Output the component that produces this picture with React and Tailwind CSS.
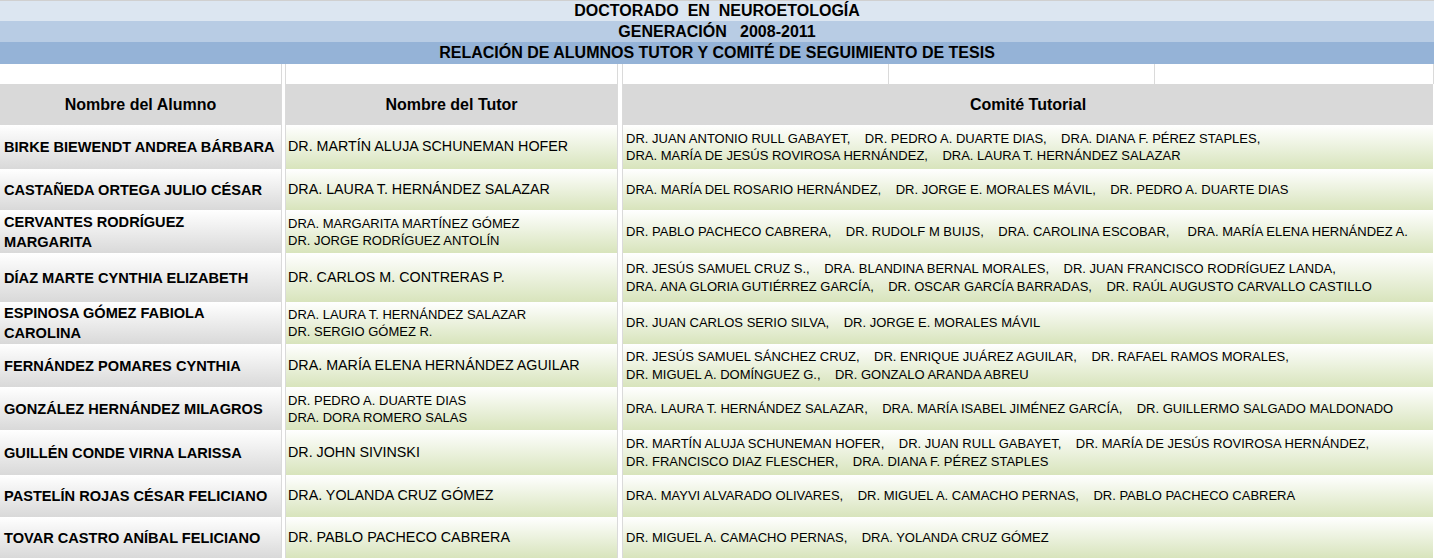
import React from "react";

const SEP = "    ";

const rows = [
  {
    h: "h-[44px]",
    alumno: ["BIRKE BIEWENDT ANDREA BÁRBARA"],
    tutor: ["DR. MARTÍN ALUJA SCHUNEMAN HOFER"],
    comite: [
      ["DR. JUAN ANTONIO RULL GABAYET,", "DR. PEDRO A. DUARTE DIAS,", "DRA. DIANA F. PÉREZ STAPLES,"],
      ["DRA. MARÍA DE JESÚS ROVIROSA HERNÁNDEZ,", "DRA. LAURA T. HERNÁNDEZ SALAZAR"],
    ],
  },
  {
    h: "h-[41px]",
    alumno: ["CASTAÑEDA ORTEGA JULIO CÉSAR"],
    tutor: ["DRA. LAURA T. HERNÁNDEZ SALAZAR"],
    comite: [["DRA. MARÍA DEL ROSARIO HERNÁNDEZ,", "DR. JORGE E. MORALES MÁVIL,", "DR. PEDRO A. DUARTE DIAS"]],
  },
  {
    h: "h-[43px]",
    alumno: ["CERVANTES RODRÍGUEZ", "MARGARITA"],
    tutor: ["DRA. MARGARITA MARTÍNEZ GÓMEZ", "DR. JORGE RODRÍGUEZ ANTOLÍN"],
    comite: [["DR. PABLO PACHECO CABRERA,", "DR. RUDOLF M BUIJS,", "DRA. CAROLINA ESCOBAR,", " DRA. MARÍA ELENA HERNÁNDEZ A."]],
  },
  {
    h: "h-[49px]",
    alumno: ["DÍAZ MARTE CYNTHIA ELIZABETH"],
    tutor: ["DR. CARLOS M. CONTRERAS P."],
    comite: [
      ["DR. JESÚS SAMUEL CRUZ S.,", "DRA. BLANDINA BERNAL MORALES,", "DR. JUAN FRANCISCO RODRÍGUEZ LANDA,"],
      ["DRA. ANA GLORIA GUTIÉRREZ GARCÍA,", "DR. OSCAR GARCÍA BARRADAS,", "DR. RAÚL AUGUSTO CARVALLO CASTILLO"],
    ],
  },
  {
    h: "h-[42px]",
    alumno: ["ESPINOSA GÓMEZ FABIOLA", "CAROLINA"],
    tutor: ["DRA. LAURA T. HERNÁNDEZ SALAZAR", "DR. SERGIO GÓMEZ R."],
    comite: [["DR. JUAN CARLOS SERIO SILVA,", "DR. JORGE E. MORALES MÁVIL"]],
  },
  {
    h: "h-[43px]",
    alumno: ["FERNÁNDEZ POMARES CYNTHIA"],
    tutor: ["DRA. MARÍA ELENA HERNÁNDEZ AGUILAR"],
    comite: [
      ["DR. JESÚS SAMUEL SÁNCHEZ CRUZ,", "DR. ENRIQUE JUÁREZ AGUILAR,", "DR. RAFAEL RAMOS MORALES,"],
      ["DR. MIGUEL A. DOMÍNGUEZ G.,", "DR. GONZALO ARANDA ABREU"],
    ],
  },
  {
    h: "h-[43px]",
    alumno: ["GONZÁLEZ HERNÁNDEZ MILAGROS"],
    tutor: ["DR. PEDRO A. DUARTE DIAS", "DRA. DORA ROMERO SALAS"],
    comite: [["DRA. LAURA T. HERNÁNDEZ SALAZAR,", "DRA. MARÍA ISABEL JIMÉNEZ GARCÍA,", "DR. GUILLERMO SALGADO MALDONADO"]],
  },
  {
    h: "h-[45px]",
    alumno: ["GUILLÉN CONDE VIRNA LARISSA"],
    tutor: ["DR. JOHN SIVINSKI"],
    comite: [
      ["DR. MARTÍN ALUJA SCHUNEMAN HOFER,", "DR. JUAN RULL GABAYET,", "DR. MARÍA DE JESÚS ROVIROSA HERNÁNDEZ,"],
      ["DR. FRANCISCO DIAZ FLESCHER,", "DRA. DIANA F. PÉREZ STAPLES"],
    ],
  },
  {
    h: "h-[42px]",
    alumno: ["PASTELÍN ROJAS CÉSAR FELICIANO"],
    tutor: ["DRA. YOLANDA CRUZ GÓMEZ"],
    comite: [["DRA. MAYVI ALVARADO OLIVARES,", "DR. MIGUEL A. CAMACHO PERNAS,", "DR. PABLO PACHECO CABRERA"]],
  },
  {
    h: "h-[41px]",
    alumno: ["TOVAR CASTRO ANÍBAL FELICIANO"],
    tutor: ["DR. PABLO PACHECO CABRERA"],
    comite: [["DR. MIGUEL A. CAMACHO PERNAS,", "DRA. YOLANDA CRUZ GÓMEZ"]],
  },
];

function Gap({ w = "w-[5px]" }) {
  // the narrow spacer columns of the sheet
  return <div className={`${w} shrink-0 bg-white border-x border-[#dadada]`} />;
}

export default function App() {
  return (
    <div
      className="w-[1434px] h-[558px] bg-white text-black overflow-hidden"
      style={{ fontFamily: '"Liberation Sans", Arial, sans-serif' }}
    >
      {/* Titles */}
      <div className="h-[21px] bg-[#dce6f1] border-t border-[#d0d0d0] flex items-center justify-center text-[16px] leading-none font-bold whitespace-pre">
        DOCTORADO  EN  NEUROETOLOGÍA
      </div>
      <div className="h-[21px] bg-[#b8cce4] flex items-center justify-center text-[16px] leading-none font-bold whitespace-pre">
        GENERACIÓN   2008-2011
      </div>
      <div className="h-[22px] bg-[#95b3d7] flex items-center justify-center text-[16px] leading-none font-bold">
        RELACIÓN DE ALUMNOS TUTOR Y COMITÉ DE SEGUIMIENTO DE TESIS
      </div>

      {/* Empty spacer row */}
      <div className="h-[20px] flex">
        <div className="w-[281px] shrink-0" />
        <Gap />
        <div className="w-[331px] shrink-0" />
        <Gap w="w-[6px]" />
        <div className="w-[266px] shrink-0 border-r border-[#dadada]" />
        <div className="w-[266px] shrink-0 border-r border-[#dadada]" />
        <div className="flex-1 border-r border-[#dadada]" />
      </div>

      {/* Column headers */}
      <div className="h-[41px] flex text-[16px] font-bold">
        <div className="w-[281px] shrink-0 bg-[#d9d9d9] flex items-center justify-center">Nombre del Alumno</div>
        <Gap />
        <div className="w-[331px] shrink-0 bg-[#d9d9d9] flex items-center justify-center">Nombre del Tutor</div>
        <Gap w="w-[6px]" />
        <div className="flex-1 bg-[#d9d9d9] flex items-center justify-center mr-px">Comité Tutorial</div>
      </div>

      {/* Data rows */}
      {rows.map((r, i) => (
        <div key={i} className={`${r.h} flex`}>
          <div className="w-[281px] shrink-0 bg-linear-to-b from-white to-[#d9d9d9] flex flex-col justify-center pl-[4px] text-[14.6px] font-bold leading-[20px]">
            {r.alumno.map((t, j) => (
              <div key={j}>{t}</div>
            ))}
          </div>
          <Gap />
          <div
            className={`w-[331px] shrink-0 bg-linear-to-b from-white to-[#d8e4bc] flex flex-col justify-center pl-[2px] ${
              r.tutor.length > 1 ? "text-[13px] leading-[17px]" : "text-[14.3px]"
            }`}
          >
            {r.tutor.map((t, j) => (
              <div key={j}>{t}</div>
            ))}
          </div>
          <Gap w="w-[6px]" />
          <div className="flex-1 mr-px bg-linear-to-b from-white to-[#d8e4bc] flex flex-col justify-center pl-[3px] text-[13px] leading-[17.5px] whitespace-pre">
            {r.comite.map((line, j) => (
              <div key={j}>{line.join(SEP)}</div>
            ))}
          </div>
        </div>
      ))}
    </div>
  );
}
